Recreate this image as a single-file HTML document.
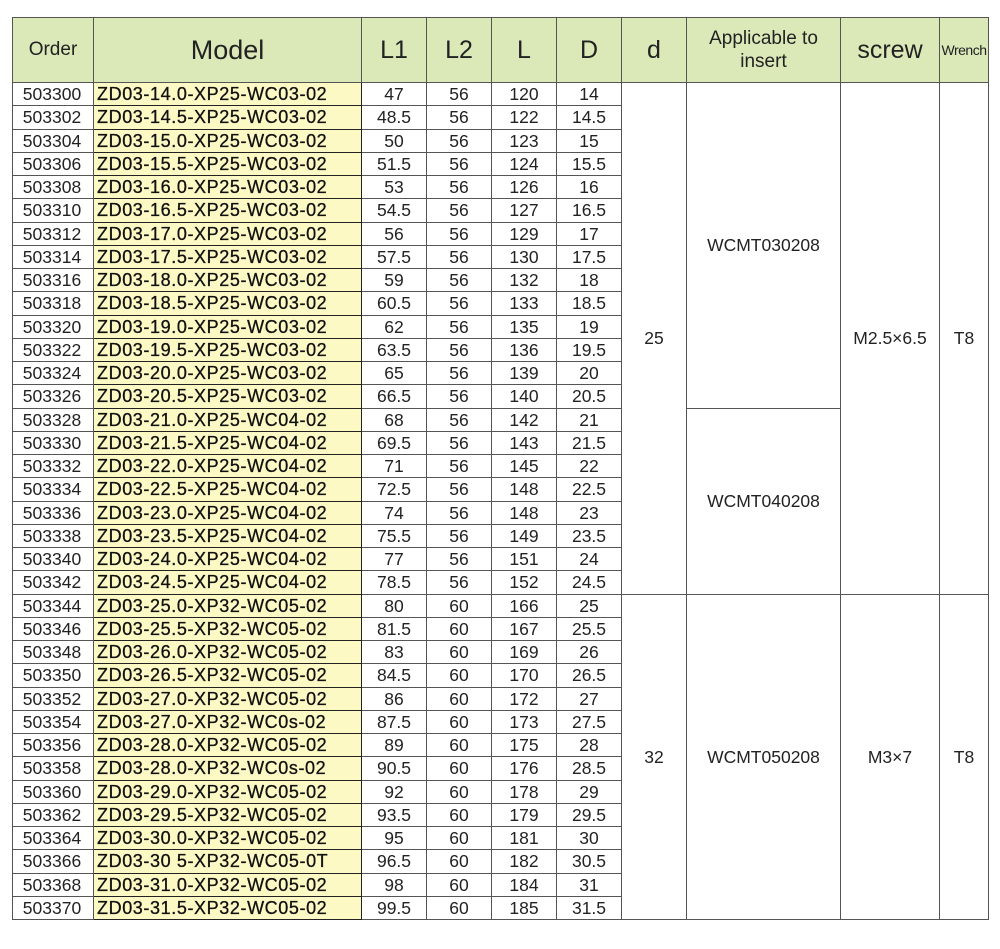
<!DOCTYPE html>
<html><head><meta charset="utf-8"><style>
body{margin:0;background:#fff;width:1000px;height:949px;overflow:hidden;font-family:"Liberation Sans",Arial,sans-serif;}
table{position:absolute;left:12px;top:17px;border-collapse:collapse;table-layout:fixed;}
td,th{border:1px solid #555;padding:0;text-align:center;color:#222;font-weight:normal;white-space:nowrap;overflow:hidden;}
th{background:#dbe8b8;height:64px;font-size:25px;}
td{height:22.25px;font-size:17.5px;line-height:20px;}
td.m{background:#fdf9c4;text-align:left;padding-left:3px;border:1.5px solid #222;color:#111;font-size:18px;letter-spacing:0.6px;-webkit-text-stroke:0.3px #111;}
td.o{text-align:center;padding-right:2px;}
</style></head><body>
<table>
<colgroup><col style="width:81px"><col style="width:268px"><col style="width:65px"><col style="width:65px"><col style="width:65px"><col style="width:65px"><col style="width:65px"><col style="width:154px"><col style="width:99px"><col style="width:49px"></colgroup>
<tr><th style="font-size:19px">Order</th><th style="font-size:27px">Model</th><th>L1</th><th>L2</th><th>L</th><th>D</th><th>d</th><th style="font-size:19px;line-height:23px">Applicable to<br>insert</th><th>screw</th><th style="font-size:14px;letter-spacing:-0.5px">Wrench</th></tr>
<tr><td class="o">503300</td><td class="m">ZD03-14.0-XP25-WC03-02</td><td>47</td><td>56</td><td>120</td><td>14</td><td rowspan="22">25</td><td rowspan="14">WCMT030208</td><td rowspan="22">M2.5×6.5</td><td rowspan="22">T8</td></tr>
<tr><td class="o">503302</td><td class="m">ZD03-14.5-XP25-WC03-02</td><td>48.5</td><td>56</td><td>122</td><td>14.5</td></tr>
<tr><td class="o">503304</td><td class="m">ZD03-15.0-XP25-WC03-02</td><td>50</td><td>56</td><td>123</td><td>15</td></tr>
<tr><td class="o">503306</td><td class="m">ZD03-15.5-XP25-WC03-02</td><td>51.5</td><td>56</td><td>124</td><td>15.5</td></tr>
<tr><td class="o">503308</td><td class="m">ZD03-16.0-XP25-WC03-02</td><td>53</td><td>56</td><td>126</td><td>16</td></tr>
<tr><td class="o">503310</td><td class="m">ZD03-16.5-XP25-WC03-02</td><td>54.5</td><td>56</td><td>127</td><td>16.5</td></tr>
<tr><td class="o">503312</td><td class="m">ZD03-17.0-XP25-WC03-02</td><td>56</td><td>56</td><td>129</td><td>17</td></tr>
<tr><td class="o">503314</td><td class="m">ZD03-17.5-XP25-WC03-02</td><td>57.5</td><td>56</td><td>130</td><td>17.5</td></tr>
<tr><td class="o">503316</td><td class="m">ZD03-18.0-XP25-WC03-02</td><td>59</td><td>56</td><td>132</td><td>18</td></tr>
<tr><td class="o">503318</td><td class="m">ZD03-18.5-XP25-WC03-02</td><td>60.5</td><td>56</td><td>133</td><td>18.5</td></tr>
<tr><td class="o">503320</td><td class="m">ZD03-19.0-XP25-WC03-02</td><td>62</td><td>56</td><td>135</td><td>19</td></tr>
<tr><td class="o">503322</td><td class="m">ZD03-19.5-XP25-WC03-02</td><td>63.5</td><td>56</td><td>136</td><td>19.5</td></tr>
<tr><td class="o">503324</td><td class="m">ZD03-20.0-XP25-WC03-02</td><td>65</td><td>56</td><td>139</td><td>20</td></tr>
<tr><td class="o">503326</td><td class="m">ZD03-20.5-XP25-WC03-02</td><td>66.5</td><td>56</td><td>140</td><td>20.5</td></tr>
<tr><td class="o">503328</td><td class="m">ZD03-21.0-XP25-WC04-02</td><td>68</td><td>56</td><td>142</td><td>21</td><td rowspan="8">WCMT040208</td></tr>
<tr><td class="o">503330</td><td class="m">ZD03-21.5-XP25-WC04-02</td><td>69.5</td><td>56</td><td>143</td><td>21.5</td></tr>
<tr><td class="o">503332</td><td class="m">ZD03-22.0-XP25-WC04-02</td><td>71</td><td>56</td><td>145</td><td>22</td></tr>
<tr><td class="o">503334</td><td class="m">ZD03-22.5-XP25-WC04-02</td><td>72.5</td><td>56</td><td>148</td><td>22.5</td></tr>
<tr><td class="o">503336</td><td class="m">ZD03-23.0-XP25-WC04-02</td><td>74</td><td>56</td><td>148</td><td>23</td></tr>
<tr><td class="o">503338</td><td class="m">ZD03-23.5-XP25-WC04-02</td><td>75.5</td><td>56</td><td>149</td><td>23.5</td></tr>
<tr><td class="o">503340</td><td class="m">ZD03-24.0-XP25-WC04-02</td><td>77</td><td>56</td><td>151</td><td>24</td></tr>
<tr><td class="o">503342</td><td class="m">ZD03-24.5-XP25-WC04-02</td><td>78.5</td><td>56</td><td>152</td><td>24.5</td></tr>
<tr><td class="o">503344</td><td class="m">ZD03-25.0-XP32-WC05-02</td><td>80</td><td>60</td><td>166</td><td>25</td><td rowspan="14">32</td><td rowspan="14">WCMT050208</td><td rowspan="14">M3×7</td><td rowspan="14">T8</td></tr>
<tr><td class="o">503346</td><td class="m">ZD03-25.5-XP32-WC05-02</td><td>81.5</td><td>60</td><td>167</td><td>25.5</td></tr>
<tr><td class="o">503348</td><td class="m">ZD03-26.0-XP32-WC05-02</td><td>83</td><td>60</td><td>169</td><td>26</td></tr>
<tr><td class="o">503350</td><td class="m">ZD03-26.5-XP32-WC05-02</td><td>84.5</td><td>60</td><td>170</td><td>26.5</td></tr>
<tr><td class="o">503352</td><td class="m">ZD03-27.0-XP32-WC05-02</td><td>86</td><td>60</td><td>172</td><td>27</td></tr>
<tr><td class="o">503354</td><td class="m">ZD03-27.0-XP32-WC0s-02</td><td>87.5</td><td>60</td><td>173</td><td>27.5</td></tr>
<tr><td class="o">503356</td><td class="m">ZD03-28.0-XP32-WC05-02</td><td>89</td><td>60</td><td>175</td><td>28</td></tr>
<tr><td class="o">503358</td><td class="m">ZD03-28.0-XP32-WC0s-02</td><td>90.5</td><td>60</td><td>176</td><td>28.5</td></tr>
<tr><td class="o">503360</td><td class="m">ZD03-29.0-XP32-WC05-02</td><td>92</td><td>60</td><td>178</td><td>29</td></tr>
<tr><td class="o">503362</td><td class="m">ZD03-29.5-XP32-WC05-02</td><td>93.5</td><td>60</td><td>179</td><td>29.5</td></tr>
<tr><td class="o">503364</td><td class="m">ZD03-30.0-XP32-WC05-02</td><td>95</td><td>60</td><td>181</td><td>30</td></tr>
<tr><td class="o">503366</td><td class="m">ZD03-30 5-XP32-WC05-0T</td><td>96.5</td><td>60</td><td>182</td><td>30.5</td></tr>
<tr><td class="o">503368</td><td class="m">ZD03-31.0-XP32-WC05-02</td><td>98</td><td>60</td><td>184</td><td>31</td></tr>
<tr><td class="o">503370</td><td class="m">ZD03-31.5-XP32-WC05-02</td><td>99.5</td><td>60</td><td>185</td><td>31.5</td></tr>
</table>
</body></html>
